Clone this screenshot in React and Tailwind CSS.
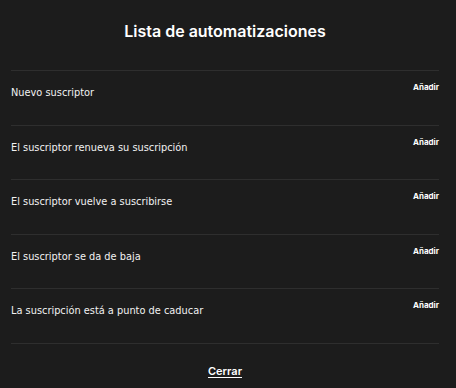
import React from 'react';

const items = [
  'Nuevo suscriptor',
  'El suscriptor renueva su suscripción',
  'El suscriptor vuelve a suscribirse',
  'El suscriptor se da de baja',
  'La suscripción está a punto de caducar',
];

const App = () => {
  return (
    <div className="w-[456px] h-[388px] bg-[#1c1c1c] text-white font-['DejaVu_Sans',sans-serif]">
      <div className="ml-[11px] mr-[17px] flex flex-col">
        {/* Header */}
        <div className="h-[70px] flex justify-center pt-[20px]">
          <h2 className="font-['Inter',sans-serif] text-[16px] font-semibold leading-[22px]">Lista de automatizaciones</h2>
        </div>

        {/* Rows */}
        <div className="border-b border-[#2e2e2e]">
          {items.map((label) => (
            <div key={label} className="h-[54.6px] border-t border-[#2e2e2e] flex items-start justify-between">
              <span className="text-[9.8px] leading-[14px] pt-[15px] text-[#f2f2f2]">{label}</span>
              <button className="font-['Inter',sans-serif] text-[8px] font-bold leading-[10px] pt-[11px] text-white">Añadir</button>
            </div>
          ))}
        </div>

        {/* Footer */}
        <div className="flex justify-center pt-[20px]">
          <button className="font-['Inter',sans-serif] text-[11px] font-semibold underline underline-offset-2 leading-[14px]">Cerrar</button>
        </div>
      </div>
    </div>
  );
};

export default App;
